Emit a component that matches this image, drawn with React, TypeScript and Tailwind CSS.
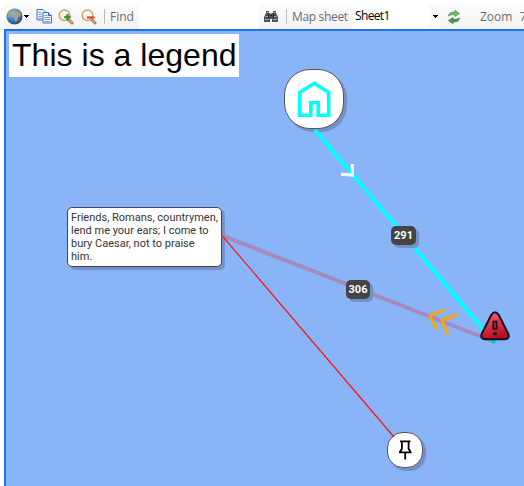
import React from "react";

function Globe() {
  return (
    <svg width="17" height="17" viewBox="0 0 17 17" className="shrink-0">
      <defs>
        <radialGradient id="sea" cx="0.4" cy="0.3" r="0.75">
          <stop offset="0" stopColor="#8fc0ec" />
          <stop offset="0.55" stopColor="#4385c2" />
          <stop offset="1" stopColor="#1d4270" />
        </radialGradient>
      </defs>
      <circle cx="8.5" cy="8.5" r="8" fill="url(#sea)" />
      <path d="M2 5l2-3 3-.5 1 2-3 2-1 3-2 1zM9 5l3-2 2.500 3 .5 2-3 1-1 4-1.500 1-1-4-1.500-2z" fill="#b49a78" />
      <path d="M4 3l3-1-1 2-2 1zM10 5l2-1 1 2-2 1z" fill="#8fae72" />
    </svg>
  );
}

function Copy() {
  return (
    <svg width="17" height="15" viewBox="0 0 17 15" className="shrink-0">
      <g fill="#e8f1fc" stroke="#4f74b5">
        <path d="M1 .5h6l2.5 2.5v8H1z" />
        <path d="M7 3.5h5.500l3 3v7.500H7z" />
      </g>
      <path d="M2.500 3.500h3M2.500 5.500h4M2.500 7.500h4M2.500 9.500h4M8.500 6.500h3M8.500 8.500h5.500M8.500 10.500h5.500M8.500 12.500h5.500" stroke="#7ba0dc" />
      <path d="M12.500 3.500v3h3" fill="#b8cff0" stroke="#3f63a6" />
    </svg>
  );
}

function Magnifier({ plus }: { plus?: boolean }) {
  return (
    <svg width="16" height="16" viewBox="0 0 16 16" className="shrink-0">
      <path d="m10.500 10.500 3.500 3.500" stroke="#b87945" strokeWidth="3" strokeLinecap="round" />
      <path d="m10.500 10.500 3.500 3.500" stroke="#e6be88" strokeWidth="1" />
      <circle cx="6.500" cy="6.300" r="5.300" fill="#f8f4ea" stroke="#d2a46d" strokeWidth="1.500" />
      <path d="M3.200 6a3 3 0 0 1 3-2.800" fill="none" stroke="#fff" />
      {plus ? (
        <path d="M9.500 5v6.500M6.200 8.200h6.600" stroke="#36953a" strokeWidth="2.300" />
      ) : (
        <path d="M6 8.500h7.500" stroke="#ee3b36" strokeWidth="2.300" />
      )}
    </svg>
  );
}

function Binoculars() {
  return (
    <svg width="14" height="13" viewBox="0 0 14 13" className="shrink-0">
      <path d="M2 3V1h3v2h1l1 1 1-1h1V1h3v2l2 4v5H8V9H6v3H0V7z" fill="#4b535c" />
      <path d="M2.500 2.500h2M9.500 2.500h2M1.500 6.500h3M9.500 6.500h3M1 9.500h4M9 9.500h4" stroke="#9eabb8" />
      <path d="M4.500 4v4M9.500 4v4M6 5.500h2" stroke="#17212d" />
    </svg>
  );
}

function Refresh() {
  return (
    <svg width="12" height="14" viewBox="0 0 12 14" className="shrink-0">
      <path d="M.5 6C.7 3.200 3 2 7 2V.3L11.500 3.500 7 6.500V4.800C4 4.600 2 4.800.5 6z" fill="#78b978" stroke="#478d49" strokeWidth=".7" />
      <path d="M11.500 8c-.2 2.800-2.500 4-6.500 4v1.700L.5 10.500 5 7.500v1.700c3 .2 5 0 6.500-1.200z" fill="#4b9b50" stroke="#367739" strokeWidth=".7" />
    </svg>
  );
}

function Caret() {
  return (
    <svg width="5" height="3" viewBox="0 0 5 3" className="shrink-0" shapeRendering="crispEdges">
      <path d="M0 0h5L2.500 3z" fill="#000" />
    </svg>
  );
}

function Toolbar() {
  return (
    <header className="ml-1 flex h-[29px] shrink-0 pt-1 font-['Open_Sans','Noto_Sans',sans-serif] text-xs leading-6 text-[#6d6d6d]">
      <div className="flex w-[135px] shrink-0 items-center rounded-bl bg-linear-to-b from-[#fcfcfc] to-[#f2f2f2] pl-0.5">
        <Globe />
        <span className="ml-px"><Caret /></span>
        <div className="ml-[7px] flex items-center gap-[5px]">
          <Copy />
          <Magnifier plus />
          <span className="ml-[2px] flex"><Magnifier /></span>
        </div>
        <span className="ml-[7px] h-[15px] w-px shrink-0 bg-[#bdbdbd]" />
        <span className="ml-[5px]">Find</span>
      </div>
      <div className="w-[120px] shrink-0 bg-white" />
      <div className="flex w-[93px] shrink-0 items-center bg-linear-to-b from-[#fcfcfc] to-[#f3f3f3] pl-[5px]">
        <Binoculars />
        <span className="ml-[8px] h-[15px] w-px shrink-0 bg-[#bdbdbd]" />
        <span className="ml-[5px] whitespace-nowrap tracking-[-0.33px]">Map sheet</span>
      </div>
      <div className="flex w-[77px] shrink-0 bg-white pl-[3px] text-black">
        <span className="w-[74px] tracking-[-0.65px]">Sheet1</span>
      </div>
      <div className="flex w-[12px] shrink-0 items-center justify-center bg-[#fafafa]"><Caret /></div>
      <div className="flex flex-1 items-center overflow-hidden bg-linear-to-b from-[#fcfcfc] to-[#f3f3f3] pl-[7px]">
        <Refresh />
        <span className="ml-[20px]">Zoom</span>
        <span className="ml-[7px]">7</span>
      </div>
    </header>
  );
}

function Links() {
  return (
    <svg width="518" height="455" viewBox="6 31 518 455" className="absolute top-0 left-0">
      <path d="M222 235.500 495 342" stroke="#a58abe" strokeWidth="4" />
      <path d="M315 130 495 343" stroke="#00ffff" strokeWidth="4" />
      <path d="m491 339 4 4.500" stroke="#24bdc3" strokeWidth="4" />
      <path d="M222 235.500 394 437" stroke="#ff1212" strokeWidth="1.200" />
      <path d="M341 174.300l11.300.8 0-11" fill="none" stroke="#fff" strokeWidth="3" />
      <path d="M444.500 309.500 430 316 436.500 329.500M456.500 314.500 442 320.500 448 334.500" fill="none" stroke="#ffa500" strokeWidth="3" />
    </svg>
  );
}

function House() {
  return (
    <svg width="34" height="38" viewBox="0 0 34 38">
      <path d="M2.800 35.200V12.500L17.300 3.300l14.400 9.200v22.700H21.200V22.800h-7.400v12.400z" fill="none" stroke="#00ffff" strokeWidth="3.600" />
    </svg>
  );
}

function Pin() {
  return (
    <svg width="14" height="20" viewBox="0 0 14 20" fill="none" stroke="#000" strokeWidth="1.800">
      <path d="M2 1.400h10.500M3.900 1.400v7.300L1.800 12.300M10.600 1.400v7.300l2.100 3.600M1 12.300h12.500M7.200 12.300V19.500" />
    </svg>
  );
}

function Warning() {
  return (
    <svg width="32" height="32" viewBox="0 0 32 32" className="absolute top-[279px] left-[473px]">
      <defs>
        <linearGradient id="alert" x1="0" y1="0" x2="0.300" y2="1">
          <stop offset="0" stopColor="#f4667a" />
          <stop offset="0.500" stopColor="#df374b" />
          <stop offset="1" stopColor="#b80e25" />
        </linearGradient>
      </defs>
      <path d="M12.500 4.600q3.500-4.600 7 0L29.300 23.800q1.700 5.300-3.500 5.500H6.200Q1 29.100 2.700 23.800z" fill="url(#alert)" stroke="#10131b" strokeWidth="2" />
      <path d="M14.300 11.500h3.400v7.300h-3.400z" fill="#9b293b" stroke="#10131b" strokeWidth="1.700" />
      <ellipse cx="16" cy="23.800" rx="2.100" ry="1.700" fill="#10131b" />
    </svg>
  );
}

export default function App() {
  return (
    <main className="flex h-[486px] w-[524px] flex-col overflow-hidden bg-white">
      <Toolbar />
      <section className="relative ml-1 flex-1 overflow-hidden border-t-2 border-l-2 border-[#1a73e8] bg-[#8ab4f8]">
        <div className="absolute top-[3px] left-[3px] h-[43px] w-[230px] bg-white pl-[3px] font-['Liberation_Sans',sans-serif] text-[32px] leading-[43px] tracking-[0.03px] whitespace-nowrap text-black">
          This is a legend
        </div>
        <div className="absolute top-[38px] left-[278px] flex h-[60px] w-[60px] items-center justify-center rounded-[26px] border border-[#555] bg-white shadow-[3px_3px_0_#7391c5]">
          <House />
        </div>
        <div className="absolute top-[176px] left-[61px] h-[60px] w-[155px] rounded-[5px] border border-[#444] bg-white pt-[3px] pl-[3px] font-[Roboto,sans-serif] text-[11px] leading-[13px] whitespace-nowrap text-[#333] shadow-[3px_3px_0_#7391c5]">
          Friends, Romans, countrymen,<br />lend me your ears; I come to<br />bury Caesar, not to praise<br />him.
        </div>
        <div className="absolute top-[401px] left-[381px] flex h-[36px] w-[36px] items-center justify-center rounded-[16px] border border-[#555] bg-white shadow-[3px_3px_0_#7391c5]">
          <Pin />
        </div>
        <Links />
        <span className="absolute top-[195px] left-[385px] flex h-[19px] w-[25px] items-center justify-center rounded-[5px] bg-[#444] pt-px font-[Roboto,sans-serif] text-[11px] font-bold text-white shadow-[3px_3px_0_#7391c5]">291</span>
        <span className="absolute top-[249px] left-[340px] flex h-[19px] w-[24px] items-center justify-center rounded-[5px] bg-[#444] pt-px font-[Roboto,sans-serif] text-[11px] font-bold text-white shadow-[3px_3px_0_#7391c5]">306</span>
        <Warning />
      </section>
    </main>
  );
}
